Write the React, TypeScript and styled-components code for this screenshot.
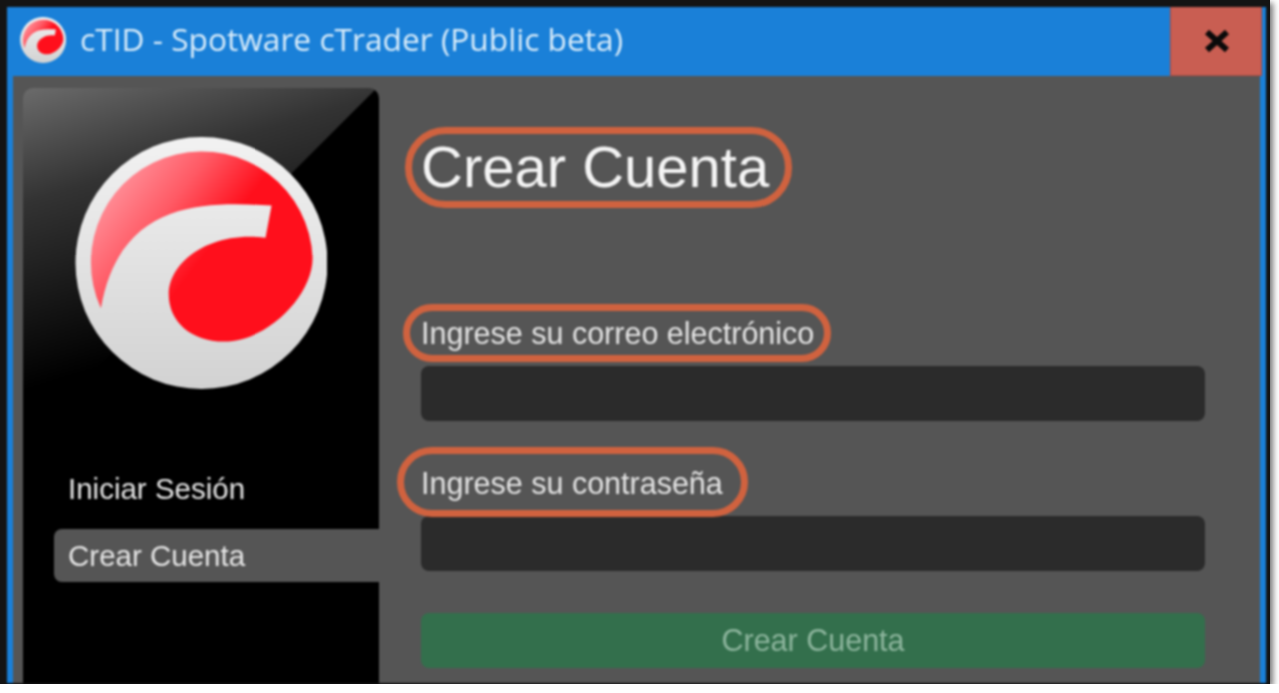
import styled, { createGlobalStyle } from "styled-components";

const Global = createGlobalStyle`
  html, body {
    margin: 0;
    background: #fff;
    overflow: hidden;
  }
`;

const Frame = styled.div`
  box-sizing: border-box;
  width: 1270px;
  height: 684px;
  padding: 7px 4px 1px 7px;
  background: #141414;
  box-shadow: 3px 3px 6px rgba(0, 0, 0, 0.55);
`;

const Win = styled.div`
  display: flex;
  flex-direction: column;
  height: 100%;
  background: #1a80d8;
  font-family: "Liberation Sans", Arial, sans-serif;
  overflow: hidden;
  filter: blur(0.8px);
`;

const TitleBar = styled.div`
  flex: none;
  display: flex;
  align-items: center;
  height: 69px;
  padding: 0 4px 0 13px;
  color: #d9ecfa;
`;

const Brand = styled.div`
  margin-bottom: 4px;
  line-height: 0;
`;

const TitleText = styled.div`
  flex: 1;
  margin: 0 0 6px 14px;
  font-family: "Open Sans", "Noto Sans", sans-serif;
  font-size: 31.7px;
  white-space: nowrap;
`;

const CloseButton = styled.button`
  display: flex;
  align-items: center;
  justify-content: center;
  width: 92px;
  height: 69px;
  padding: 0 0 0 2px;
  border: 1px solid #a94c42;
  border-top: 0;
  background: #c95e52;
`;

const Body = styled.div`
  flex: 1;
  display: flex;
  min-height: 0;
  margin: 0 6px 0 6px;
  padding: 12px 0 0 10px;
  background: #555555;
`;

const Sidebar = styled.div`
  flex: none;
  box-sizing: border-box;
  width: 356px;
  padding: 49px 0 0 31px;
  border-radius: 10px 10px 0 0;
  background:
    linear-gradient(135deg, transparent 250px, #000 250.5px),
    linear-gradient(163deg, #6b6b6b 0, #333 110px, #000 290px);
`;

const LogoSlot = styled.div`
  margin: 0 0 73px 21px;
  line-height: 0;
`;

const NavItem = styled.div<{ $active?: boolean }>`
  display: flex;
  align-items: center;
  height: 53px;
  margin-bottom: 14px;
  padding-left: 14px;
  border-radius: 8px 0 0 8px;
  background: ${(p) => (p.$active ? "#555555" : "transparent")};
  color: #e6e6e6;
  font-size: 29.5px;
`;

const Main = styled.div`
  flex: 1;
  padding: 44px 55px 0 42px;
`;

const Callout = styled.div<{ $l: number; $r: number; $t: number; $b: number }>`
  position: relative;
  width: fit-content;
  white-space: nowrap;
  &::after {
    content: "";
    position: absolute;
    left: ${(p) => -p.$l}px;
    right: ${(p) => -p.$r}px;
    top: ${(p) => -p.$t}px;
    bottom: ${(p) => -p.$b}px;
    border: 7px solid #d0623f;
    border-radius: 999px;
  }
`;

const Heading = styled(Callout)`
  height: 70px;
  line-height: 70px;
  margin-bottom: 114px;
  color: #f4f4f4;
  font-size: 58px;
`;

const Label = styled(Callout)`
  height: 34px;
  line-height: 34px;
  margin-bottom: 16px;
  color: #e4e4e4;
  font-size: 30.5px;
`;

const Field = styled.div`
  height: 55px;
  margin-bottom: 45px;
  border-radius: 8px;
  background: #2b2b2b;
`;

const PasswordField = styled(Field)`
  margin-bottom: 42px;
`;

const Submit = styled.div`
  display: flex;
  align-items: center;
  justify-content: center;
  height: 55px;
  border-radius: 8px;
  background: #336f4c;
  color: #8db59d;
  font-size: 30.5px;
`;

function Logo({ size }: { size: number }) {
  return (
    <svg width={size} height={size} viewBox="15 7 250 250">
      <defs>
        <linearGradient id="ring" x1="0" y1="0" x2="0" y2="1">
          <stop offset="0" stopColor="#f2f2f2" />
          <stop offset="1" stopColor="#d2d2d2" />
        </linearGradient>
        <linearGradient id="swoosh" gradientUnits="userSpaceOnUse" x1="80" y1="20" x2="170" y2="90">
          <stop offset="0" stopColor="#ff8f98" />
          <stop offset="0.5" stopColor="#ff5964" />
          <stop offset="1" stopColor="#ff0f1c" />
        </linearGradient>
      </defs>
      <circle cx="140.5" cy="132" r="125" fill="url(#ring)" />
      <path
        d="M40.7 177 A110 110 0 1 1 250.7 127 C250.7 165 205 210 163 210 C130 210 108 190 108 163 C108 130 150 100 204 107 L210 75 C150 72 60 66 40.7 177 Z"
        fill="url(#swoosh)"
      />
    </svg>
  );
}

export default function App() {
  return (
    <>
      <Global />
      <Frame>
        <Win>
          <TitleBar>
            <Brand>
              <Logo size={46} />
            </Brand>
            <TitleText>cTID - Spotware cTrader (Public beta)</TitleText>
            <CloseButton>
              <svg width="26" height="24" viewBox="0 0 26 24">
                <path d="M3 3 L23 21 M23 3 L3 21" stroke="#0a0a0a" strokeWidth="6" />
              </svg>
            </CloseButton>
          </TitleBar>
          <Body>
            <Sidebar>
              <LogoSlot>
                <Logo size={252} />
              </LogoSlot>
              <NavItem>Iniciar Sesión</NavItem>
              <NavItem $active>Crear Cuenta</NavItem>
            </Sidebar>
            <Main>
              <Heading $l={16} $r={23} $t={5} $b={6}>Crear Cuenta</Heading>
              <Label $l={18} $r={17} $t={12} $b={12}>Ingrese su correo electrónico</Label>
              <Field />
              <Label $l={24} $r={25} $t={19} $b={17}>Ingrese su contraseña</Label>
              <PasswordField />
              <Submit>Crear Cuenta</Submit>
            </Main>
          </Body>
        </Win>
      </Frame>
    </>
  );
}
